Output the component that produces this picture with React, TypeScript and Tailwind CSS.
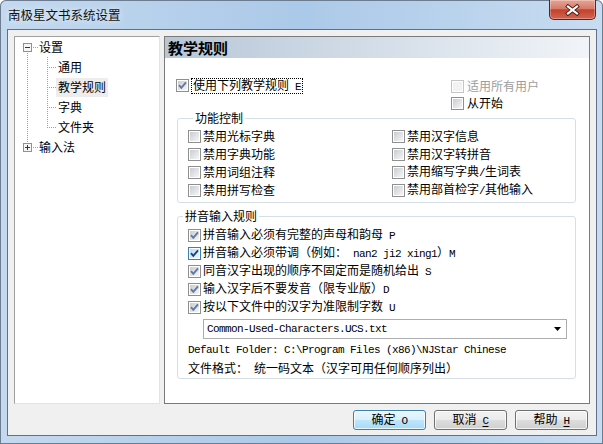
import React from 'react';

const cjk = "font-['Noto_Sans_CJK_SC',sans-serif]";
const mono = "font-['Liberation_Mono',monospace] text-[11px] tracking-[-0.6px]";

const M: React.FC<{ children: React.ReactNode }> = ({ children }) => (
  <span className={`${mono} whitespace-pre`}>{children}</span>
);

type Variant = 'normal' | 'hot' | 'disabled';

const CheckBox: React.FC<{ checked?: boolean; variant?: Variant }> = ({ checked, variant = 'normal' }) => {
  const outer =
    variant === 'hot' ? 'border-[#3c7fb1]' : variant === 'disabled' ? 'border-[#c4c4c4]' : 'border-[#8e8f8f]';
  const inner =
    variant === 'hot'
      ? 'bg-linear-to-br from-[#b9dcf3] to-[#eaf6fd]'
      : variant === 'disabled'
        ? 'bg-[#f2f2f2]'
        : 'bg-linear-to-br from-[#c9ccd1] to-[#f6f6f6]';
  const tick = variant === 'hot' ? '#1c3f8c' : '#6078a4';
  return (
    <span className={`relative flex h-[13px] w-[13px] shrink-0 items-center justify-center border bg-white ${outer}`}>
      <span className={`h-[9px] w-[9px] ${inner}`} />
      {checked && (
        <svg className="absolute inset-0" width="11" height="11" viewBox="0 0 11 11">
          <path d="M2 5.2 L4.3 7.8 L9 2.4" fill="none" stroke={tick} strokeWidth="1.9" />
        </svg>
      )}
    </span>
  );
};

const Row: React.FC<{ checked?: boolean; variant?: Variant; children: React.ReactNode }> = ({
  checked,
  variant,
  children,
}) => (
  <div className="flex h-[18px] items-center gap-[2px] text-[12px] leading-[14px] whitespace-nowrap">
    <CheckBox checked={checked} variant={variant} />
    <span>{children}</span>
  </div>
);

const vdots = (x: number, from: number, to: number) => {
  const out: React.ReactNode[] = [];
  for (let y = from; y <= to; y += 2) out.push(<rect key={`v${x}-${y}`} x={x} y={y} width="1" height="1" fill="#a0a0a0" />);
  return out;
};
const hdots = (y: number, from: number, to: number) => {
  const out: React.ReactNode[] = [];
  for (let x = from; x <= to; x += 2) out.push(<rect key={`h${y}-${x}`} x={x} y={y} width="1" height="1" fill="#a0a0a0" />);
  return out;
};

const Expander: React.FC<{ open: boolean }> = ({ open }) => (
  <>
    <rect x="8.5" y="6.5" width="8" height="8" fill="#f6f6f6" stroke="#919191" />
    <rect x="10" y="10" width="5" height="1" fill="#2a3550" />
    {!open && <rect x="12" y="8" width="1" height="5" fill="#2a3550" />}
  </>
);

const TreeRoot: React.FC<{ label: string; open: boolean; first?: boolean }> = ({ label, open, first }) => (
  <div className="flex h-[20px] items-center">
    <svg width="24" height="20" viewBox="0 0 24 20" className="shrink-0">
      {first ? vdots(12, 16, 19) : vdots(12, 0, 5)}
      {hdots(10, 18, 22)}
      <Expander open={open} />
    </svg>
    <span className="text-[12px] leading-[14px]">{label}</span>
  </div>
);

const TreeChild: React.FC<{ label: string; last?: boolean; selected?: boolean }> = ({ label, last, selected }) => (
  <div className="flex h-[20px] items-center">
    <svg width="41" height="20" viewBox="0 0 41 20" className="shrink-0">
      {vdots(12, 0, 19)}
      {vdots(32, 0, last ? 10 : 19)}
      {hdots(10, 34, 40)}
    </svg>
    <span
      className={`flex h-[19px] items-center px-[2px] text-[12px] leading-[14px] ${selected ? 'bg-[#ededed]' : ''}`}
    >
      {label}
    </span>
  </div>
);

const Button: React.FC<{ primary?: boolean; children: React.ReactNode }> = ({ primary, children }) => (
  <div
    className={`flex h-[20px] w-[73px] items-center justify-center rounded-[3px] border text-[12px] leading-[14px] shadow-[inset_0_0_0_1px_rgba(255,255,255,0.75)] ${
      primary
        ? 'border-[#3c7fb1] bg-[linear-gradient(#eaf6fd,#d9f0fc_50%,#bee6fd_50%,#a7d9f5)]'
        : 'border-[#707070] bg-[linear-gradient(#f2f2f2,#ebebeb_50%,#dddddd_50%,#cfcfcf)]'
    }`}
  >
    <span className="whitespace-nowrap">{children}</span>
  </div>
);

export default function App() {
  return (
    <div
      className={`flex h-[444px] w-[603px] flex-col overflow-hidden rounded-t-[6px] bg-linear-to-r from-[#c4d9ef] via-[#abc9e8] to-[#c8dcf1] text-black shadow-[inset_0_0_0_1px_#6c7d91] ${cjk}`}
    >
      {/* title bar */}
      <div className="flex h-[29px] shrink-0 items-start justify-between pr-[7px] pl-[8px]">
        <span className="text-[12.5px] leading-[30px] text-[#111] [text-shadow:0_0_6px_rgba(255,255,255,0.9)]">
          南极星文书系统设置
        </span>
        <div className="flex h-[20px] w-[47px] items-center justify-center rounded-b-[5px] border border-t-0 border-[#5b231c] bg-[linear-gradient(#e8a596,#d57b68_45%,#c2412e_52%,#d3654f)] shadow-[inset_0_0_0_1px_rgba(255,255,255,0.3)]">
          <svg width="15" height="12" viewBox="0 0 15 12">
            <path d="M3 2.5 L12 9.5 M12 2.5 L3 9.5" stroke="#4a1c16" strokeWidth="4" strokeLinecap="square" />
            <path d="M3 2.5 L12 9.5 M12 2.5 L3 9.5" stroke="#ffffff" strokeWidth="2.2" strokeLinecap="square" />
          </svg>
        </div>
      </div>

      {/* client area */}
      <div className="mr-[6px] mb-[8px] ml-[7px] flex flex-1 flex-col border border-[#5f7186] bg-[#f0f0f0] px-[6px] pt-[6px] pb-[5px]">
        <div className="flex h-[368px] gap-[4px]">
          {/* tree */}
          <div className="w-[146px] shrink-0 border border-[#e3e3e3] border-t-[#a0a0a0] border-l-[#a0a0a0] bg-white">
            <TreeRoot label="设置" open first />
            <TreeChild label="通用" />
            <TreeChild label="教学规则" selected />
            <TreeChild label="字典" />
            <TreeChild label="文件夹" last />
            <TreeRoot label="输入法" open={false} />
          </div>

          {/* settings panel */}
          <div className="flex flex-1 flex-col border border-[#7a7a7a] bg-white">
            <div className="flex h-[21px] shrink-0 items-center bg-linear-to-r from-[#b7c7d8] to-[#f1f4f8] pl-[3px]">
              <span className="text-[15px] leading-[18px] font-bold">教学规则</span>
            </div>

            <div className="flex flex-col pr-[13px] pl-[12px]">
              <div className="flex h-[53px] justify-between">
                <div className="mt-[19px] -ml-[1px] flex h-[17px] items-center gap-[2px] text-[12px] whitespace-nowrap">
                  <CheckBox checked />
                  <span className="border border-dotted border-black px-[1px] leading-[11px]">
                    使用下列教学规则<M> E</M>
                  </span>
                </div>
                <div className="flex w-[125px] flex-col gap-[1px] pt-[20px]">
                  <div className="flex h-[17px] items-center gap-[3px] text-[12px] leading-[14px] text-[#9d9d9d]">
                    <CheckBox variant="disabled" />
                    <span>适用所有用户</span>
                  </div>
                  <div className="flex h-[17px] items-center gap-[3px] text-[12px] leading-[14px]">
                    <CheckBox />
                    <span>从开始</span>
                  </div>
                </div>
              </div>

              <fieldset className="rounded-[3px] border border-[#d5dfe5] pt-[2px] pb-[3px] pl-[10px]">
                <legend className="ml-[5px] px-[2px] text-[12px] leading-[14px]">功能控制</legend>
                <div className="grid grid-cols-[204px_1fr]">
                  <Row>禁用光标字典</Row>
                  <Row>禁用汉字信息</Row>
                  <Row>禁用字典功能</Row>
                  <Row>禁用汉字转拼音</Row>
                  <Row>禁用词组注释</Row>
                  <Row>
                    禁用缩写字典<M>/</M>生词表
                  </Row>
                  <Row>禁用拼写检查</Row>
                  <Row>
                    禁用部首检字<M>/</M>其他输入
                  </Row>
                </div>
              </fieldset>

              <fieldset className="mt-[6px] rounded-[3px] border border-[#d5dfe5] pt-[3px] pb-[1px]">
                <legend className="ml-[5px] px-[2px] text-[12px] leading-[14px]">拼音输入规则</legend>
                <div className="flex flex-col pl-[10px]">
                  <Row checked>
                    拼音输入必须有完整的声母和韵母<M> P</M>
                  </Row>
                  <Row checked variant="hot">
                    拼音输入必须带调（例如：<M> nan2 ji2 xing1</M>）<M>M</M>
                  </Row>
                  <Row checked>
                    同音汉字出现的顺序不固定而是随机给出<M> S</M>
                  </Row>
                  <Row checked>
                    输入汉字后不要发音（限专业版）<M>D</M>
                  </Row>
                  <Row checked>
                    按以下文件中的汉字为准限制字数<M> U</M>
                  </Row>
                </div>
                <div className="mt-[3px] mr-[8px] ml-[25px] flex h-[20px] items-center justify-between border border-[#abadb3] bg-white pr-[5px] pl-[3px]">
                  <M>Common-Used-Characters.UCS.txt</M>
                  <svg width="7" height="4" viewBox="0 0 7 4">
                    <path d="M0 0 H7 L3.5 4 Z" fill="#000" />
                  </svg>
                </div>
                <div className="mt-[2px] flex flex-col pl-[10px]">
                  <div className="flex h-[18px] items-center whitespace-nowrap">
                    <M>Default Folder: C:\Program Files (x86)\NJStar Chinese</M>
                  </div>
                  <div className="flex h-[18px] items-center text-[12px] leading-[14px] whitespace-nowrap">
                    <span>文件格式：</span>
                    <span className="ml-[6px]">统一码文本（汉字可用任何顺序列出）</span>
                  </div>
                </div>
              </fieldset>
            </div>
          </div>
        </div>

        {/* buttons */}
        <div className="mt-[6px] flex h-[20px] justify-end gap-[8px] pr-[2px]">
          <Button primary>
            确定<M> O</M>
          </Button>
          <Button>
            取消<M> </M>
            <span className="underline underline-offset-[2px]">
              <M>C</M>
            </span>
          </Button>
          <Button>
            帮助<M> </M>
            <span className="underline underline-offset-[2px]">
              <M>H</M>
            </span>
          </Button>
        </div>
      </div>
    </div>
  );
}
